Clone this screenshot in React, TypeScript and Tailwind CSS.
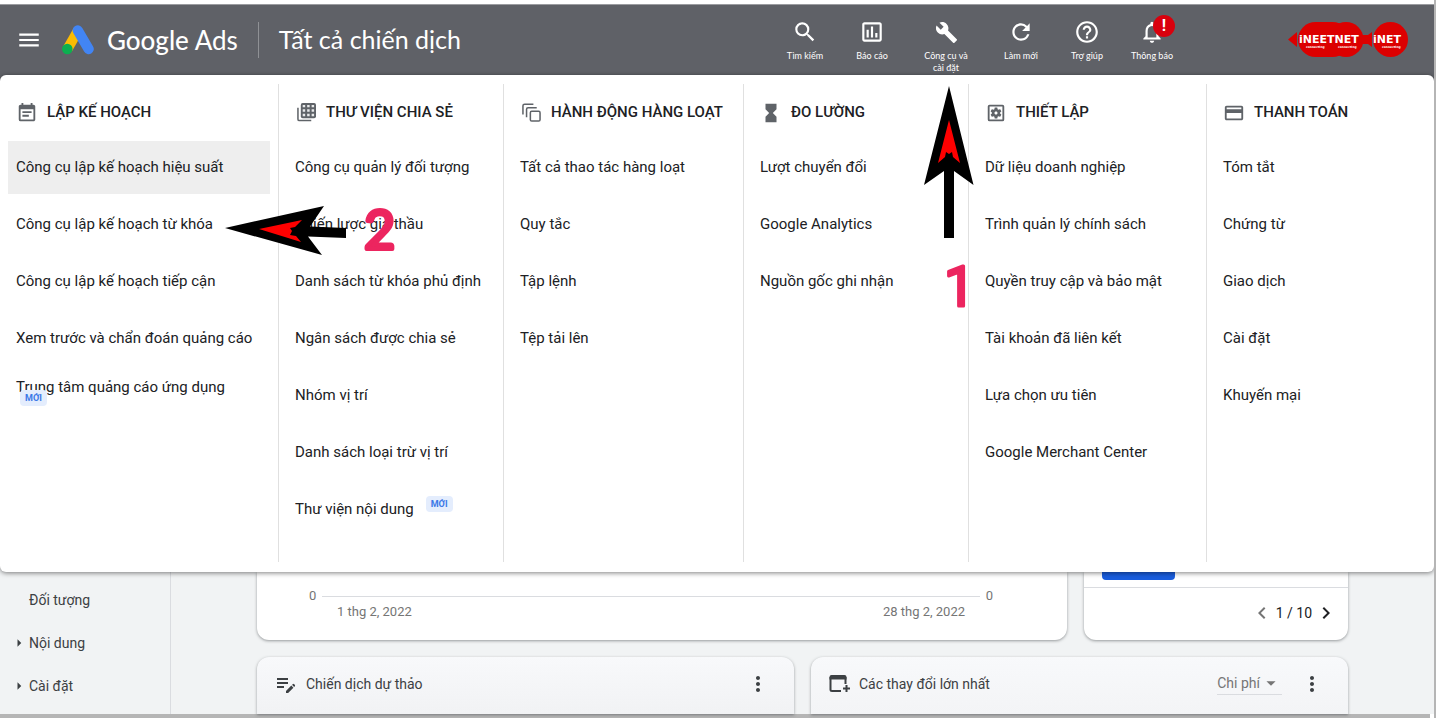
import type { ReactNode } from 'react'
import {
  MdArrowDropDown,
  MdArrowRight,
  MdBuild,
  MdChevronLeft,
  MdChevronRight,
  MdEditNote,
  MdEventNote,
  MdHelpOutline,
  MdHourglassFull,
  MdMenu,
  MdMoreVert,
  MdNotificationsNone,
  MdOutlineInsertChartOutlined,
  MdOutlineSettingsApplications,
  MdPayment,
  MdRefresh,
  MdSearch,
} from 'react-icons/md'

type MenuItem = { label: string; badge?: 'below' | 'side'; active?: boolean; note?: ReactNode }
type MenuColumn = { title: string; icon: ReactNode; items: MenuItem[]; note?: ReactNode }

function AdsLogo() {
  return (
    <svg width="32" height="30" viewBox="0 0 32 30" className="shrink-0">
      <path d="M16 5.5 5.5 24" stroke="#fbbc04" strokeWidth="10" />
      <path d="M15.8 5.5 26.6 24" stroke="#4285f4" strokeWidth="10.4" strokeLinecap="round" />
      <circle cx="5.3" cy="24" r="5.3" fill="#0caf50" />
    </svg>
  )
}

function LibraryIcon() {
  return (
    <svg width="19" height="19" viewBox="0 0 20 20" fill="none">
      <path d="M1 5v12a1.5 1.5 0 0 0 1.5 1.5H15" stroke="currentColor" strokeWidth="1.6" />
      <rect x="4" y="0" width="16" height="16" rx="2" fill="currentColor" />
      <path
        d="M6 2h2.600v2.600H6zM10.700 2h2.600v2.600h-2.600zM15.400 2H18v2.600h-2.600zM6 6.700h2.600v2.600H6zM10.700 6.700h2.600v2.600h-2.600zM15.400 6.700H18v2.600h-2.600zM6 11.400h2.600V14H6zM10.700 11.400h2.600V14h-2.600zM15.400 11.400H18V14h-2.600z"
        fill="#e8e9ea"
      />
    </svg>
  )
}

function BulkIcon() {
  return (
    <svg width="19" height="19" viewBox="0 0 20 20" fill="none" stroke="currentColor" strokeWidth="1.6">
      <path d="M1 12V3a1.800 1.800 0 0 1 1.800-1.800H12M4.800 15V6.500A1.600 1.600 0 0 1 6.400 4.900H15.500" />
      <rect x="8.800" y="8.800" width="10.200" height="10.200" rx="1.400" />
    </svg>
  )
}

function WindowPlusIcon() {
  return (
    <svg width="22" height="20" viewBox="0 0 22 20" fill="none" stroke="currentColor" strokeWidth="2">
      <path d="M12 17H3a1.500 1.500 0 0 1-1.500-1.500V3M16.500 3v7" />
      <path d="M.5 5.500V3A2 2 0 0 1 2.500 1h13a2 2 0 0 1 2 2v2.500z" fill="currentColor" stroke="none" />
      <path d="M17.500 11v7M14 14.500h7" />
    </svg>
  )
}

function InetLogo() {
  return (
    <svg width="120" height="36" viewBox="0 0 120 36" className="shrink-0">
      <g fill="#dc0000">
        <path d="M0 17.500 9 10v15z" />
        <rect x="10" y="0" width="52" height="35" rx="17.500" />
        <circle cx="58" cy="17.500" r="17.500" />
        <path d="M74 17.500 84 10v15z" />
        <circle cx="102.500" cy="17.500" r="17.500" />
        <path d="M73 13h8v9h-8z" />
      </g>
      <g fill="white" fontFamily="DejaVu Sans" fontWeight="700">
        <text x="11" y="21" fontSize="11">iNEETNET</text>
        <text x="85" y="21" fontSize="11">iNET</text>
        <text x="18" y="26" fontSize="3">connecting</text>
        <text x="50" y="26" fontSize="3">connecting</text>
        <text x="94" y="26" fontSize="3">connecting</text>
      </g>
    </svg>
  )
}

// arrow and step number share one drawing, so they stay together
function StepOne() {
  return (
    <svg
      width="50"
      height="226"
      viewBox="0 0 50 226"
      className="pointer-events-none absolute top-[2px] -right-[6px] z-20 overflow-visible"
    >
      <path d="M25 0 49.500 99 30 85v67H20V85L0 99z" fill="black" />
      <path d="m25 34 11 43-7-6-1-5-3 2-3-2-1 5-7 6z" fill="red" />
      <text
        x="20"
        y="220"
        fontFamily="Roboto"
        fontSize="55"
        fill="#ec255f"
        stroke="#ec255f"
        strokeWidth="3"
        strokeLinejoin="round"
      >
        1
      </text>
    </svg>
  )
}

function StepTwo() {
  return (
    <svg
      width="190"
      height="50"
      viewBox="0 0 190 50"
      className="pointer-events-none absolute top-2 left-[217px] z-20 overflow-visible"
    >
      <path d="M0 22 99 0 85 20.500 121 22v10L83 30.500 97 49z" fill="black" />
      <path d="M34 23 77 14l-7 7-5 1 2 3-2 4 6 1 5 6z" fill="red" />
      <text
        x="139"
        y="43"
        fontFamily="Lato"
        fontSize="54"
        fill="#ec255f"
        stroke="#ec255f"
        strokeWidth="4"
        strokeLinejoin="round"
      >
        2
      </text>
    </svg>
  )
}

const tools = [
  { label: 'Tìm kiếm', icon: <MdSearch size={26} />, width: 'w-[60px]' },
  { label: 'Báo cáo', icon: <MdOutlineInsertChartOutlined size={26} />, width: 'w-[74px]' },
  { label: 'Công cụ và cài đặt', icon: <MdBuild size={23} />, width: 'w-[74px]' },
  { label: 'Làm mới', icon: <MdRefresh size={26} />, width: 'w-[76px]' },
  { label: 'Trợ giúp', icon: <MdHelpOutline size={26} />, width: 'w-[56px]' },
  { label: 'Thông báo', icon: <MdNotificationsNone size={26} />, width: 'w-[74px]', alert: true },
]

const columns: MenuColumn[] = [
  {
    title: 'LẬP KẾ HOẠCH',
    icon: <MdEventNote size={22} />,
    items: [
      { label: 'Công cụ lập kế hoạch hiệu suất', active: true },
      { label: 'Công cụ lập kế hoạch từ khóa', note: <StepTwo /> },
      { label: 'Công cụ lập kế hoạch tiếp cận' },
      { label: 'Xem trước và chẩn đoán quảng cáo' },
      { label: 'Trung tâm quảng cáo ứng dụng', badge: 'below' },
    ],
  },
  {
    title: 'THƯ VIỆN CHIA SẺ',
    icon: <LibraryIcon />,
    items: [
      { label: 'Công cụ quản lý đối tượng' },
      { label: 'Chiến lược giá thầu' },
      { label: 'Danh sách từ khóa phủ định' },
      { label: 'Ngân sách được chia sẻ' },
      { label: 'Nhóm vị trí' },
      { label: 'Danh sách loại trừ vị trí' },
      { label: 'Thư viện nội dung', badge: 'side' },
    ],
  },
  {
    title: 'HÀNH ĐỘNG HÀNG LOẠT',
    icon: <BulkIcon />,
    items: [
      { label: 'Tất cả thao tác hàng loạt' },
      { label: 'Quy tắc' },
      { label: 'Tập lệnh' },
      { label: 'Tệp tải lên' },
    ],
  },
  {
    title: 'ĐO LƯỜNG',
    icon: <MdHourglassFull size={22} />,
    note: <StepOne />,
    items: [{ label: 'Lượt chuyển đổi' }, { label: 'Google Analytics' }, { label: 'Nguồn gốc ghi nhận' }],
  },
  {
    title: 'THIẾT LẬP',
    icon: <MdOutlineSettingsApplications size={22} />,
    items: [
      { label: 'Dữ liệu doanh nghiệp' },
      { label: 'Trình quản lý chính sách' },
      { label: 'Quyền truy cập và bảo mật' },
      { label: 'Tài khoản đã liên kết' },
      { label: 'Lựa chọn ưu tiên' },
      { label: 'Google Merchant Center' },
    ],
  },
  {
    title: 'THANH TOÁN',
    icon: <MdPayment size={22} />,
    items: [
      { label: 'Tóm tắt' },
      { label: 'Chứng từ' },
      { label: 'Giao dịch' },
      { label: 'Cài đặt' },
      { label: 'Khuyến mại' },
    ],
  },
]

function NewBadge() {
  return (
    <span className="block rounded-sm bg-[#e4edfd] px-[5px] text-[9px] leading-4 font-bold text-[#3b78e7]">MỚI</span>
  )
}

function Header() {
  return (
    <header className="flex h-[71px] items-center border-t border-[#9b9ca0] bg-[#5f6167] font-[Lato,'Noto_Sans',sans-serif] text-white">
      <button aria-label="Menu" className="ml-4">
        <MdMenu size={26} />
      </button>
      <a href="#" className="ml-5 flex items-center gap-[13px] text-[26px]">
        <AdsLogo />
        <span className="whitespace-nowrap">
          <span className="font-medium">Google</span> Ads
        </span>
      </a>
      <div className="ml-5 h-9 w-px bg-[#8f9195]" />
      <h1 className="ml-5 text-[25px] whitespace-nowrap">Tất cả chiến dịch</h1>
      <nav className="ml-auto flex h-full items-start pt-[14px]">
        {tools.map((tool) => (
          <button key={tool.label} className={`${tool.width} relative flex flex-col items-center gap-[5px]`}>
            <span className="flex h-[26px] items-center">{tool.icon}</span>
            <span className="max-w-[52px] text-[9px] leading-3">{tool.label}</span>
            {tool.alert && (
              <span className="absolute -top-1 left-[38px] flex size-[22px] items-center justify-center rounded-full bg-[#d9000d] font-[Roboto,sans-serif] text-base leading-none font-bold">
                !
              </span>
            )}
          </button>
        ))}
      </nav>
      <a href="#" aria-label="iNET" className="mr-[26px] ml-[99px]">
        <InetLogo />
      </a>
    </header>
  )
}

function ToolsMenu() {
  return (
    <div className="bg-linear-to-b from-[#5f6167] from-50% to-[#f1f3f4] to-50%">
      <div className="relative z-10 grid grid-cols-[minmax(0,279fr)_minmax(0,225fr)_minmax(0,240fr)_minmax(0,225fr)_minmax(0,238fr)_minmax(0,227fr)] rounded-md bg-white pt-[9px] pb-[10px] shadow-[0_1px_5px_rgba(0,0,0,0.5)]">
        {columns.map((column) => (
          <section key={column.title} className="relative h-[478px] border-r border-[#e0e0e0] px-2 last:border-r-0">
            <h2 className="flex h-[57px] items-center gap-2 pl-[7px] text-[15px] font-medium whitespace-nowrap text-[#202124]">
              <span className="flex w-6 justify-center text-[#5f6368]">{column.icon}</span>
              {column.title}
            </h2>
            <ul className="flex flex-col gap-1">
              {column.items.map((item) => (
                <li key={item.label} className="relative">
                  <a
                    href="#"
                    className={`flex h-[53px] items-center px-2 text-[15px] whitespace-nowrap text-[#202124] ${item.active ? 'bg-[#eeeeee]' : ''} ${item.badge === 'below' ? 'pb-4' : ''}`}
                  >
                    {item.label}
                    {item.badge === 'side' && (
                      <span className="mb-3 ml-3">
                        <NewBadge />
                      </span>
                    )}
                  </a>
                  {item.badge === 'below' && (
                    <span className="absolute bottom-4 left-3">
                      <NewBadge />
                    </span>
                  )}
                  {item.note}
                </li>
              ))}
            </ul>
            {column.note}
          </section>
        ))}
      </div>
    </div>
  )
}

const card = 'bg-white shadow-[0_1px_3px_rgba(60,64,67,0.5)]'

function Dashboard() {
  return (
    <div className="flex bg-[#f1f3f4] text-[#3c4043]">
      <aside className="w-[171px] shrink-0 border-r border-[#dadce0] pt-[6px] text-sm">
        {['Đối tượng', 'Nội dung', 'Cài đặt'].map((label, i) => (
          <a key={label} href="#" className="flex h-[43px] items-center pl-[10px]">
            <span className="w-[19px]">{i > 0 && <MdArrowRight size={18} />}</span>
            {label}
          </a>
        ))}
      </aside>
      <main className="min-w-0 flex-1 px-[86px]">
        <div className="grid grid-cols-[810fr_264fr] gap-[17px]">
          <section className={`${card} h-[68px] rounded-b-xl px-[52px] pt-4 text-[13px] text-[#757575]`}>
            <div className="flex items-center gap-[6px] leading-4">
              <span>0</span>
              <div className="h-px flex-1 bg-[#dadce0]" />
              <span className="mr-[22px]">0</span>
            </div>
            <div className="mr-[50px] ml-7 flex justify-between leading-4">
              <span>1 thg 2, 2022</span>
              <span>28 thg 2, 2022</span>
            </div>
          </section>
          <section className={`${card} flex h-[68px] flex-col rounded-b-xl`}>
            <div className="h-4 border-b border-[#dadce0] pl-[18px]">
              <button aria-label="Xem" className="block h-2 w-[73px] rounded-b-sm bg-[#1a5ddd]" />
            </div>
            <div className="flex flex-1 items-center justify-end gap-0.5 pr-[10px] pb-0.5 text-sm text-[#202124]">
              <button aria-label="Trước" className="text-[#757575]">
                <MdChevronLeft size={24} />
              </button>
              1 / 10
              <button aria-label="Sau">
                <MdChevronRight size={24} />
              </button>
            </div>
          </section>
        </div>
        <div className="mt-[17px] grid grid-cols-2 gap-[17px] text-sm">
          <section className={`${card} flex h-[57px] items-center rounded-t-xl bg-linear-to-b from-[#f8f9fb] to-[#f1f2f4] pr-6 pb-1 pl-[17px]`}>
            <MdEditNote size={24} />
            <h3 className="ml-2">Chiến dịch dự thảo</h3>
            <button aria-label="Tùy chọn" className="ml-auto">
              <MdMoreVert size={24} />
            </button>
          </section>
          <section className={`${card} flex h-[57px] items-center rounded-t-xl bg-linear-to-b from-[#f8f9fb] to-[#f3f4f6] pr-6 pb-1 pl-[18px]`}>
            <WindowPlusIcon />
            <h3 className="ml-2">Các thay đổi lớn nhất</h3>
            <button className="ml-auto flex items-center border-b border-[#dadce0] text-sm text-[#757575]">
              Chi phí
              <MdArrowDropDown size={22} />
            </button>
            <button aria-label="Tùy chọn" className="ml-[18px]">
              <MdMoreVert size={24} />
            </button>
          </section>
        </div>
      </main>
    </div>
  )
}

export default function App() {
  return (
    <div className="overflow-hidden border-r-2 border-[#b5b5b5] bg-white pt-1 font-[Roboto,sans-serif]">
      <Header />
      <ToolsMenu />
      <Dashboard />
      <div className="mr-1 h-1 bg-[#b5b5b5]" />
    </div>
  )
}
